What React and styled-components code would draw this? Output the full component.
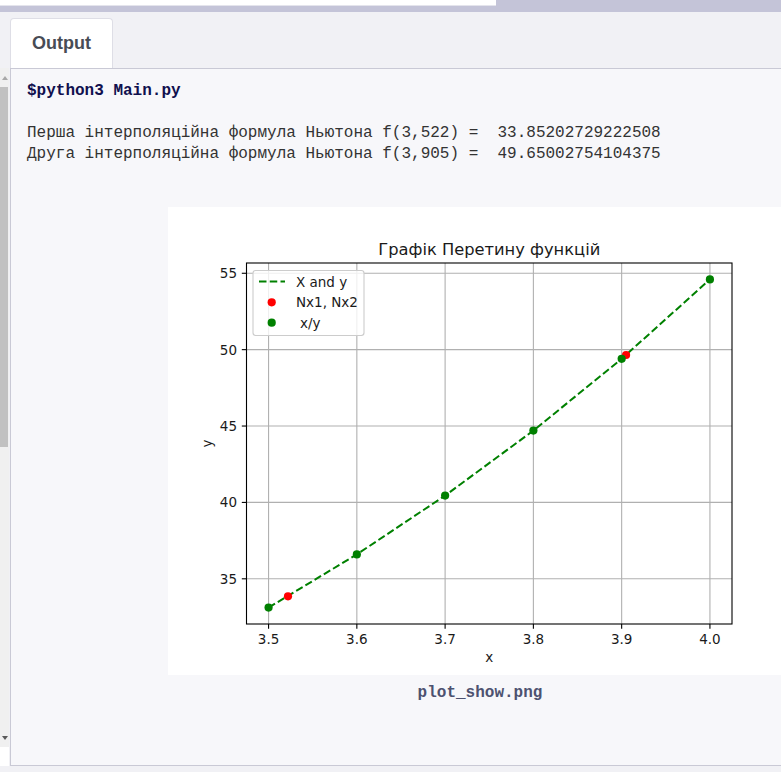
import React from 'react'
import styled, { createGlobalStyle } from 'styled-components'

const GlobalStyle = createGlobalStyle`
  html, body {
    margin: 0;
    padding: 0;
    background: #f1f1f5;
    overflow: hidden;
  }
`

const Page = styled.div`
  width: 781px;
  height: 772px;
  display: flex;
  flex-direction: column;
  background: #f1f1f5;
  overflow: hidden;
`

const TopBar = styled.div`
  height: 12px;
  flex-shrink: 0;
  background: #c4c4d8;
`

const TopField = styled.div`
  width: 496px;
  height: 6px;
  box-sizing: border-box;
  background: #ffffff;
  border-bottom: 1px solid #e4e4ec;
`

const Workspace = styled.div`
  display: flex;
  flex-direction: column;
  padding-top: 6px;
`

const TabRow = styled.div`
  display: flex;
  padding-left: 10px;
`

const Tab = styled.div`
  height: 50px;
  box-sizing: border-box;
  display: flex;
  align-items: center;
  padding: 0 21px 0 21px;
  background: #ffffff;
  border: 1px solid #dedee6;
  border-bottom: none;
  border-radius: 4px 4px 0 0;
  font-family: "Liberation Sans", Arial, sans-serif;
  font-weight: bold;
  font-size: 18px;
  color: #474c55;
`

const Body = styled.div`
  display: flex;
  height: 698px;
`

const Gutter = styled.div`
  width: 9px;
  margin-right: 1px;
  flex-shrink: 0;
  display: flex;
  flex-direction: column;
`

const Track = styled.div`
  flex: 1;
  display: flex;
  flex-direction: column;
  background: #f0f0f0;
`

const ArrowBox = styled.div`
  height: 19px;
  display: flex;
  align-items: center;
  justify-content: center;
`

const Arrow = styled.div`
  width: 0;
  height: 0;
  border-left: 3px solid transparent;
  border-right: 3px solid transparent;
  ${props => props.down
    ? 'border-top: 4px solid #5a5a5a;'
    : 'border-bottom: 4px solid #a8a8a8;'}
`

const Thumb = styled.div`
  height: 360px;
  width: 8px;
  background: #c1c1c1;
`

const Spacer = styled.div`
  flex: 1;
`

const Corner = styled.div`
  height: 19px;
  background: #ffffff;
`

const Panel = styled.div`
  flex: 0 0 940px;
  box-sizing: border-box;
  padding: 12px 16px;
  background: #f7f7fa;
  border: 1px solid #c9c9d5;
`

const Console = styled.pre`
  margin: 0;
  font-family: "Liberation Mono", "DejaVu Sans Mono", monospace;
  font-size: 16px;
  line-height: 21px;
  color: #333333;
  white-space: pre;
`

const Command = styled.span`
  font-weight: bold;
  color: #10104e;
`

const Figure = styled.div`
  margin-top: 42px;
  display: flex;
  flex-direction: column;
  align-items: center;
`

const PlotImage = styled.svg`
  display: block;
  background: #ffffff;
`

const Caption = styled.div`
  margin-top: 8px;
  font-family: "Liberation Mono", "DejaVu Sans Mono", monospace;
  font-weight: bold;
  font-size: 16px;
  line-height: 21px;
  color: #4d5270;
`

const PlotText = styled.text`
  font-family: "DejaVu Sans", sans-serif;
  font-size: ${props => props.size || 13.5}px;
  fill: #1a1a1a;
`

// axes box inside the 624x468 figure
const X0 = 78.5, X1 = 564, Y0 = 56, Y1 = 417
const xLo = 3.475, xHi = 4.025
const yMin = Math.exp(3.5), yMax = Math.exp(4)
const yPad = (yMax - yMin) * 0.05
const yLo = yMin - yPad, yHi = yMax + yPad

const sx = x => X0 + (x - xLo) / (xHi - xLo) * (X1 - X0)
const sy = y => Y0 + (yHi - y) / (yHi - yLo) * (Y1 - Y0)

const xTicks = [3.5, 3.6, 3.7, 3.8, 3.9, 4.0]
const yTicks = [35, 40, 45, 50, 55]
const points = xTicks.map(x => [x, Math.exp(x)])
const newton = [[3.522, 33.85202729222508], [3.905, 49.65002754104375]]

const GREEN = '#008000'
const RED = '#ff0000'

const Plot = () => {
  const linePath = points.map(([x, y], i) => `${i ? 'L' : 'M'}${sx(x).toFixed(2)},${sy(y).toFixed(2)}`).join(' ')
  return (
    <PlotImage width="624" height="468" viewBox="0 0 624 468">
      {/* grid */}
      {xTicks.map(t => (
        <line key={'gx' + t} x1={sx(t)} x2={sx(t)} y1={Y0} y2={Y1} stroke="#b0b0b0" strokeWidth="1.1" />
      ))}
      {yTicks.map(t => (
        <line key={'gy' + t} x1={X0} x2={X1} y1={sy(t)} y2={sy(t)} stroke="#b0b0b0" strokeWidth="1.1" />
      ))}

      {/* data */}
      <path d={linePath} fill="none" stroke={GREEN} strokeWidth="2" strokeDasharray="7.5 3.25" />
      {newton.map(([x, y]) => (
        <circle key={'r' + x} cx={sx(x)} cy={sy(y)} r="4.1" fill={RED} />
      ))}
      {points.map(([x, y]) => (
        <circle key={'g' + x} cx={sx(x)} cy={sy(y)} r="4.1" fill={GREEN} />
      ))}

      {/* spines */}
      <rect x={X0} y={Y0} width={X1 - X0} height={Y1 - Y0} fill="none" stroke="#000" strokeWidth="1.1" />

      {/* ticks + labels */}
      {xTicks.map(t => (
        <g key={'tx' + t}>
          <line x1={sx(t)} x2={sx(t)} y1={Y1} y2={Y1 + 4.7} stroke="#000" strokeWidth="1.1" />
          <PlotText x={sx(t)} y={Y1 + 20} textAnchor="middle">{t.toFixed(1)}</PlotText>
        </g>
      ))}
      {yTicks.map(t => (
        <g key={'ty' + t}>
          <line x1={X0 - 4.7} x2={X0} y1={sy(t)} y2={sy(t)} stroke="#000" strokeWidth="1.1" />
          <PlotText x={X0 - 9.5} y={sy(t) + 5} textAnchor="end">{t}</PlotText>
        </g>
      ))}

      <PlotText x={(X0 + X1) / 2} y={48} size={16.3} textAnchor="middle">Графік Перетину функцій</PlotText>
      <PlotText x={(X0 + X1) / 2} y={455} textAnchor="middle">x</PlotText>
      <PlotText x={44} y={(Y0 + Y1) / 2} textAnchor="middle" transform={`rotate(-90 44 ${(Y0 + Y1) / 2})`}>y</PlotText>

      {/* legend */}
      <rect x="85" y="63.5" width="111" height="65" rx="2.7" fill="#ffffff" fillOpacity="0.8" stroke="#cccccc" strokeWidth="1.1" />
      <line x1="91" x2="117" y1="74.5" y2="74.5" stroke={GREEN} strokeWidth="2" strokeDasharray="7.5 3.25" />
      <PlotText x="128" y="79.5">X and y</PlotText>
      <circle cx="103.7" cy="95.3" r="4.1" fill={RED} />
      <PlotText x="128" y="100">Nx1, Nx2</PlotText>
      <circle cx="103.7" cy="115.7" r="4.1" fill={GREEN} />
      <PlotText x="132" y="120.5">x/y</PlotText>
    </PlotImage>
  )
}

const App = () => (
  <Page>
    <GlobalStyle />
    <TopBar>
      <TopField />
    </TopBar>
    <Workspace>
      <TabRow>
        <Tab>Output</Tab>
      </TabRow>
      <Body>
        <Gutter>
          <Track>
            <ArrowBox><Arrow /></ArrowBox>
            <Thumb />
            <Spacer />
            <ArrowBox><Arrow down /></ArrowBox>
          </Track>
          <Corner />
        </Gutter>
        <Panel>
          <Console>
            <Command>$python3 Main.py</Command>{'\n'}
            {'\n'}
            {'Перша інтерполяційна формула Ньютона f(3,522) =  33.85202729222508\n'}
            {'Друга інтерполяційна формула Ньютона f(3,905) =  49.65002754104375'}
          </Console>
          <Figure>
            <Plot />
            <Caption>plot_show.png</Caption>
          </Figure>
        </Panel>
      </Body>
    </Workspace>
  </Page>
)

export default App
